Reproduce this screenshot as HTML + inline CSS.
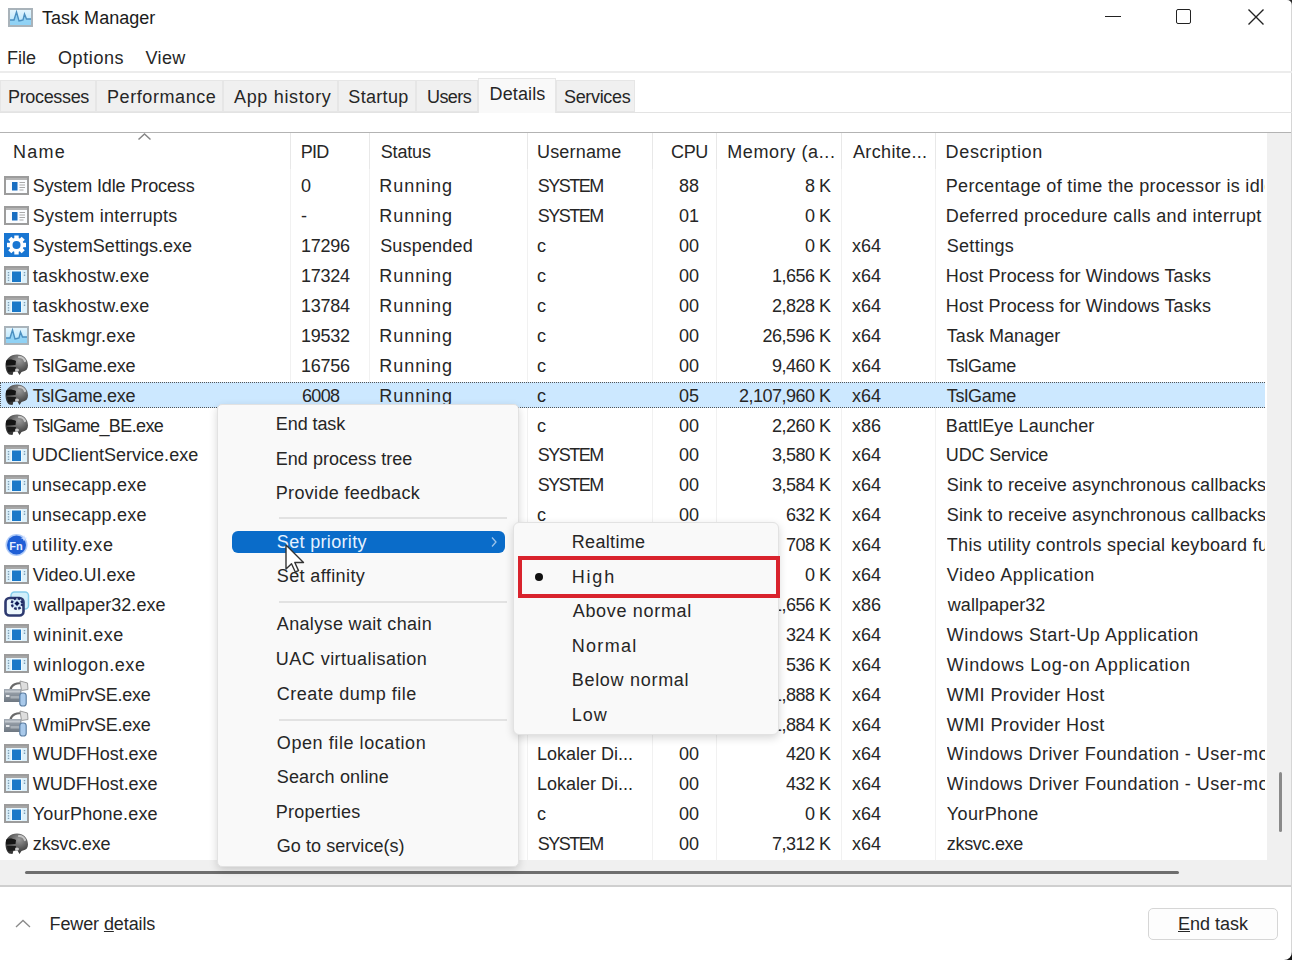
<!DOCTYPE html>
<html><head><meta charset="utf-8"><style>
html,body{margin:0;padding:0;}
body{width:1292px;height:960px;position:relative;overflow:hidden;background:#fff;font-family:"Liberation Sans", sans-serif;}
.t{position:absolute;white-space:nowrap;}
</style></head><body>
<svg width="25" height="19" viewBox="0 0 25 19" style="position:absolute;left:8px;top:8px">
<defs><linearGradient id="tmg88" x1="0" y1="0" x2="0" y2="1"><stop offset="0" stop-color="#e6f6fe"/><stop offset="0.5" stop-color="#c9ecfd"/><stop offset="1" stop-color="#a6dcf8"/></linearGradient></defs>
<rect x="1" y="1" width="23" height="17" fill="url(#tmg88)" stroke="#a9b3ba" stroke-width="2"/>
<path d="M2 12 L6 12 L8.5 4 L11 13 L13 12.5 L15 12 L16.5 6 L18.5 11 L23 11 L23 17 L2 17 Z" fill="#8dd0f4" opacity="0.9"/>
<polyline points="2,12 6,12 8.5,4 11,13 13,12.5 15,12 16.5,6 18.5,11 23,11" fill="none" stroke="#4b8fc0" stroke-width="1.4"/>
</svg>
<div class="t" style="left:42.00px;top:7.56px;font-size:18px;line-height:20.00px;color:#1b1b1b;letter-spacing:0.022px;">Task Manager</div>
<div style="position:absolute;left:1105px;top:16px;width:16px;height:1.3px;background:#222"></div>
<div style="position:absolute;left:1176px;top:9px;width:15px;height:15px;border:1.5px solid #222;border-radius:2px;box-sizing:border-box"></div>
<svg width="18" height="18" style="position:absolute;left:1247px;top:8px"><path d="M1.5 1.5 L16.5 16.5 M16.5 1.5 L1.5 16.5" stroke="#222" stroke-width="1.4"/></svg>
<div style="position:absolute;left:1291px;top:0px;width:1px;height:960px;background:#d6d6d6"></div>
<div class="t" style="left:7.00px;top:47.76px;font-size:18px;line-height:20.00px;color:#262626;letter-spacing:0.002px;">File</div>
<div class="t" style="left:58.00px;top:47.76px;font-size:18px;line-height:20.00px;color:#262626;letter-spacing:0.594px;">Options</div>
<div class="t" style="left:145.50px;top:47.76px;font-size:18px;line-height:20.00px;color:#262626;letter-spacing:0.370px;">View</div>
<div style="position:absolute;left:0px;top:71px;width:1292px;height:2px;background:#ececec"></div>
<div style="position:absolute;left:0px;top:111.5px;width:1292px;height:1px;background:#e3e3e3"></div>
<div style="position:absolute;left:0px;top:80px;width:96px;height:32px;background:#f0f0f0;border:1px solid #e6e6e6;box-sizing:border-box"></div>
<div class="t" style="left:8.00px;top:86.76px;font-size:18px;line-height:20.00px;color:#262626;letter-spacing:-0.342px;">Processes</div>
<div style="position:absolute;left:96px;top:80px;width:127px;height:32px;background:#f0f0f0;border:1px solid #e6e6e6;box-sizing:border-box"></div>
<div class="t" style="left:107.00px;top:86.76px;font-size:18px;line-height:20.00px;color:#262626;letter-spacing:0.577px;">Performance</div>
<div style="position:absolute;left:223px;top:80px;width:115px;height:32px;background:#f0f0f0;border:1px solid #e6e6e6;box-sizing:border-box"></div>
<div class="t" style="left:234.00px;top:86.76px;font-size:18px;line-height:20.00px;color:#262626;letter-spacing:0.676px;">App history</div>
<div style="position:absolute;left:338px;top:80px;width:78px;height:32px;background:#f0f0f0;border:1px solid #e6e6e6;box-sizing:border-box"></div>
<div class="t" style="left:348.30px;top:86.76px;font-size:18px;line-height:20.00px;color:#262626;letter-spacing:0.329px;">Startup</div>
<div style="position:absolute;left:416px;top:80px;width:62px;height:32px;background:#f0f0f0;border:1px solid #e6e6e6;box-sizing:border-box"></div>
<div class="t" style="left:427.00px;top:86.76px;font-size:18px;line-height:20.00px;color:#262626;letter-spacing:-0.576px;">Users</div>
<div style="position:absolute;left:478px;top:77.5px;width:78px;height:35px;background:#f9f9f9;border:1px solid #e6e6e6;border-bottom:none;box-sizing:border-box"></div>
<div class="t" style="left:489.50px;top:84.16px;font-size:18px;line-height:20.00px;color:#262626;letter-spacing:0.130px;">Details</div>
<div style="position:absolute;left:556px;top:80px;width:79px;height:32px;background:#f0f0f0;border:1px solid #e6e6e6;box-sizing:border-box"></div>
<div class="t" style="left:564.00px;top:86.76px;font-size:18px;line-height:20.00px;color:#262626;letter-spacing:-0.332px;">Services</div>
<div style="position:absolute;left:0px;top:131.5px;width:1291px;height:1.5px;background:#b3b3b3"></div>
<svg width="16" height="9" style="position:absolute;left:137px;top:132px"><path d="M1.5 7.5 L7.5 2 L13.5 7.5" fill="none" stroke="#858585" stroke-width="1.5"/></svg>
<div class="t" style="left:13.00px;top:141.76px;font-size:18px;line-height:20.00px;color:#262626;letter-spacing:1.265px;">Name</div>
<div class="t" style="left:300.80px;top:141.76px;font-size:18px;line-height:20.00px;color:#262626;letter-spacing:-0.753px;">PID</div>
<div class="t" style="left:380.70px;top:141.76px;font-size:18px;line-height:20.00px;color:#262626;letter-spacing:-0.146px;">Status</div>
<div class="t" style="left:537.00px;top:141.76px;font-size:18px;line-height:20.00px;color:#262626;letter-spacing:0.183px;">Username</div>
<div class="t" style="left:671.00px;top:141.76px;font-size:18px;line-height:20.00px;color:#262626;letter-spacing:-0.352px;">CPU</div>
<div class="t" style="left:727.20px;top:141.76px;font-size:18px;line-height:20.00px;color:#262626;letter-spacing:0.608px;">Memory (a...</div>
<div class="t" style="left:853.00px;top:141.76px;font-size:18px;line-height:20.00px;color:#262626;letter-spacing:0.342px;">Archite...</div>
<div class="t" style="left:945.60px;top:141.76px;font-size:18px;line-height:20.00px;color:#262626;letter-spacing:0.668px;">Description</div>
<div style="position:absolute;left:1267px;top:133px;width:24px;height:727px;background:#f0f0f0"></div>
<div style="position:absolute;left:1279px;top:772px;width:2.5px;height:60px;background:#8a8a8a;border-radius:2px"></div>
<div style="position:absolute;left:290px;top:133px;width:1px;height:727px;background:#f1f1f1"></div>
<div style="position:absolute;left:290px;top:133px;width:1px;height:36px;background:#e8e8e8"></div>
<div style="position:absolute;left:369px;top:133px;width:1px;height:727px;background:#f1f1f1"></div>
<div style="position:absolute;left:369px;top:133px;width:1px;height:36px;background:#e8e8e8"></div>
<div style="position:absolute;left:527px;top:133px;width:1px;height:727px;background:#f1f1f1"></div>
<div style="position:absolute;left:527px;top:133px;width:1px;height:36px;background:#e8e8e8"></div>
<div style="position:absolute;left:652px;top:133px;width:1px;height:727px;background:#f1f1f1"></div>
<div style="position:absolute;left:652px;top:133px;width:1px;height:36px;background:#e8e8e8"></div>
<div style="position:absolute;left:716px;top:133px;width:1px;height:727px;background:#f1f1f1"></div>
<div style="position:absolute;left:716px;top:133px;width:1px;height:36px;background:#e8e8e8"></div>
<div style="position:absolute;left:841px;top:133px;width:1px;height:727px;background:#f1f1f1"></div>
<div style="position:absolute;left:841px;top:133px;width:1px;height:36px;background:#e8e8e8"></div>
<div style="position:absolute;left:935px;top:133px;width:1px;height:727px;background:#f1f1f1"></div>
<div style="position:absolute;left:935px;top:133px;width:1px;height:36px;background:#e8e8e8"></div>
<div style="position:absolute;left:0px;top:381.7px;width:1265px;height:26px;background:#cce8ff;border:1px dotted #555;border-right:none;box-sizing:border-box"></div>
<svg width="25" height="19" style="position:absolute;left:4px;top:176px"><rect x="1" y="1" width="23" height="17" fill="#fbfdff" stroke="#9c9c9c" stroke-width="2"/><rect x="2" y="2" width="21" height="2" fill="#b5b5b5"/><rect x="8" y="6" width="5.5" height="8.5" fill="#1a6fc2"/><path d="M15.5 6.5h5.5M15.5 9h5.5M15.5 11.5h5.5M15.5 14h4" stroke="#a9a9a9" stroke-width="1"/></svg>
<div class="t" style="left:32.80px;top:176.36px;font-size:18px;line-height:20.00px;color:#262626;letter-spacing:-0.120px;">System Idle Process</div>
<div class="t" style="left:301.00px;top:176.36px;font-size:18px;line-height:20.00px;color:#262626;">0</div>
<div class="t" style="left:379.20px;top:176.36px;font-size:18px;line-height:20.00px;color:#262626;letter-spacing:0.976px;">Running</div>
<div class="t" style="left:537.70px;top:176.36px;font-size:18px;line-height:20.00px;color:#262626;letter-spacing:-1.484px;">SYSTEM</div>
<div class="t" style="right:593px;top:176.36px;font-size:18px;line-height:20.00px;color:#262626;text-align:right;">88</div>
<div class="t" style="right:461.5px;top:176.36px;font-size:18px;line-height:20.00px;color:#262626;text-align:right;letter-spacing:-0.5px">8 K</div>
<div class="t" style="left:852.00px;top:176.36px;font-size:18px;line-height:20.00px;color:#262626;"></div>
<div class="t" style="left:945.80px;top:176.36px;width:319.70px;overflow:hidden;font-size:18px;line-height:20px;color:#262626;letter-spacing:0.317px">Percentage of time the processor is idle</div>
<svg width="25" height="19" style="position:absolute;left:4px;top:206px"><rect x="1" y="1" width="23" height="17" fill="#fbfdff" stroke="#9c9c9c" stroke-width="2"/><rect x="2" y="2" width="21" height="2" fill="#b5b5b5"/><rect x="8" y="6" width="5.5" height="8.5" fill="#1a6fc2"/><path d="M15.5 6.5h5.5M15.5 9h5.5M15.5 11.5h5.5M15.5 14h4" stroke="#a9a9a9" stroke-width="1"/></svg>
<div class="t" style="left:32.80px;top:206.26px;font-size:18px;line-height:20.00px;color:#262626;letter-spacing:0.278px;">System interrupts</div>
<div class="t" style="left:301.00px;top:206.26px;font-size:18px;line-height:20.00px;color:#262626;">-</div>
<div class="t" style="left:379.20px;top:206.26px;font-size:18px;line-height:20.00px;color:#262626;letter-spacing:0.976px;">Running</div>
<div class="t" style="left:537.70px;top:206.26px;font-size:18px;line-height:20.00px;color:#262626;letter-spacing:-1.484px;">SYSTEM</div>
<div class="t" style="right:593px;top:206.26px;font-size:18px;line-height:20.00px;color:#262626;text-align:right;">01</div>
<div class="t" style="right:461.5px;top:206.26px;font-size:18px;line-height:20.00px;color:#262626;text-align:right;letter-spacing:-0.5px">0 K</div>
<div class="t" style="left:852.00px;top:206.26px;font-size:18px;line-height:20.00px;color:#262626;"></div>
<div class="t" style="left:945.80px;top:206.26px;font-size:18px;line-height:20.00px;color:#262626;letter-spacing:0.334px;">Deferred procedure calls and interrupt</div>
<svg width="25" height="25" viewBox="0 0 25 25" style="position:absolute;left:4px;top:233px"><rect x="0" y="0" width="25" height="24" fill="#1976d2"/><g transform="translate(12.5 12)" fill="#fff"><circle r="7.2"/><rect x="-2.2" y="-9.5" width="4.4" height="19" transform="rotate(0)"/><rect x="-2.2" y="-9.5" width="4.4" height="19" transform="rotate(45)"/><rect x="-2.2" y="-9.5" width="4.4" height="19" transform="rotate(90)"/><rect x="-2.2" y="-9.5" width="4.4" height="19" transform="rotate(135)"/></g><circle cx="12.5" cy="12" r="4" fill="#1976d2"/></svg>
<div class="t" style="left:32.80px;top:236.16px;font-size:18px;line-height:20.00px;color:#262626;letter-spacing:0.008px;">SystemSettings.exe</div>
<div class="t" style="left:301.00px;top:236.16px;font-size:18px;line-height:20.00px;color:#262626;letter-spacing:-0.261px;">17296</div>
<div class="t" style="left:380.20px;top:236.16px;font-size:18px;line-height:20.00px;color:#262626;letter-spacing:0.179px;">Suspended</div>
<div class="t" style="left:537.00px;top:236.16px;font-size:18px;line-height:20.00px;color:#262626;">c</div>
<div class="t" style="right:593px;top:236.16px;font-size:18px;line-height:20.00px;color:#262626;text-align:right;">00</div>
<div class="t" style="right:461.5px;top:236.16px;font-size:18px;line-height:20.00px;color:#262626;text-align:right;letter-spacing:-0.5px">0 K</div>
<div class="t" style="left:852.00px;top:236.16px;font-size:18px;line-height:20.00px;color:#262626;">x64</div>
<div class="t" style="left:946.80px;top:236.16px;font-size:18px;line-height:20.00px;color:#262626;letter-spacing:0.280px;">Settings</div>
<svg width="25" height="19" style="position:absolute;left:4px;top:266px"><rect x="1" y="1" width="23" height="17" fill="#eef8fd" stroke="#9c9c9c" stroke-width="2"/><rect x="2" y="2" width="21" height="2" fill="#a8a8a8"/><rect x="2" y="4" width="5" height="13" fill="#ddf1fb"/><rect x="18" y="4" width="5" height="13" fill="#ddf1fb"/><rect x="8" y="5.5" width="9" height="10.5" fill="#1a78c8"/><path d="M4.5 6v9" stroke="#7f9fb5" stroke-width="1.4" stroke-dasharray="1.3 1.3"/><path d="M20.5 6v4" stroke="#7f9fb5" stroke-width="1.4" stroke-dasharray="1.3 1.3"/></svg>
<div class="t" style="left:32.80px;top:266.06px;font-size:18px;line-height:20.00px;color:#262626;letter-spacing:0.287px;">taskhostw.exe</div>
<div class="t" style="left:301.00px;top:266.06px;font-size:18px;line-height:20.00px;color:#262626;letter-spacing:-0.261px;">17324</div>
<div class="t" style="left:379.20px;top:266.06px;font-size:18px;line-height:20.00px;color:#262626;letter-spacing:0.976px;">Running</div>
<div class="t" style="left:537.00px;top:266.06px;font-size:18px;line-height:20.00px;color:#262626;">c</div>
<div class="t" style="right:593px;top:266.06px;font-size:18px;line-height:20.00px;color:#262626;text-align:right;">00</div>
<div class="t" style="right:461.5px;top:266.06px;font-size:18px;line-height:20.00px;color:#262626;text-align:right;letter-spacing:-0.5px">1,656 K</div>
<div class="t" style="left:852.00px;top:266.06px;font-size:18px;line-height:20.00px;color:#262626;">x64</div>
<div class="t" style="left:945.80px;top:266.06px;font-size:18px;line-height:20.00px;color:#262626;letter-spacing:0.118px;">Host Process for Windows Tasks</div>
<svg width="25" height="19" style="position:absolute;left:4px;top:296px"><rect x="1" y="1" width="23" height="17" fill="#eef8fd" stroke="#9c9c9c" stroke-width="2"/><rect x="2" y="2" width="21" height="2" fill="#a8a8a8"/><rect x="2" y="4" width="5" height="13" fill="#ddf1fb"/><rect x="18" y="4" width="5" height="13" fill="#ddf1fb"/><rect x="8" y="5.5" width="9" height="10.5" fill="#1a78c8"/><path d="M4.5 6v9" stroke="#7f9fb5" stroke-width="1.4" stroke-dasharray="1.3 1.3"/><path d="M20.5 6v4" stroke="#7f9fb5" stroke-width="1.4" stroke-dasharray="1.3 1.3"/></svg>
<div class="t" style="left:32.80px;top:295.96px;font-size:18px;line-height:20.00px;color:#262626;letter-spacing:0.287px;">taskhostw.exe</div>
<div class="t" style="left:301.00px;top:295.96px;font-size:18px;line-height:20.00px;color:#262626;letter-spacing:-0.261px;">13784</div>
<div class="t" style="left:379.20px;top:295.96px;font-size:18px;line-height:20.00px;color:#262626;letter-spacing:0.976px;">Running</div>
<div class="t" style="left:537.00px;top:295.96px;font-size:18px;line-height:20.00px;color:#262626;">c</div>
<div class="t" style="right:593px;top:295.96px;font-size:18px;line-height:20.00px;color:#262626;text-align:right;">00</div>
<div class="t" style="right:461.5px;top:295.96px;font-size:18px;line-height:20.00px;color:#262626;text-align:right;letter-spacing:-0.5px">2,828 K</div>
<div class="t" style="left:852.00px;top:295.96px;font-size:18px;line-height:20.00px;color:#262626;">x64</div>
<div class="t" style="left:945.80px;top:295.96px;font-size:18px;line-height:20.00px;color:#262626;letter-spacing:0.118px;">Host Process for Windows Tasks</div>
<svg width="25" height="19" viewBox="0 0 25 19" style="position:absolute;left:4px;top:326px">
<defs><linearGradient id="tmg4326" x1="0" y1="0" x2="0" y2="1"><stop offset="0" stop-color="#e6f6fe"/><stop offset="0.5" stop-color="#c9ecfd"/><stop offset="1" stop-color="#a6dcf8"/></linearGradient></defs>
<rect x="1" y="1" width="23" height="17" fill="url(#tmg4326)" stroke="#a9b3ba" stroke-width="2"/>
<path d="M2 12 L6 12 L8.5 4 L11 13 L13 12.5 L15 12 L16.5 6 L18.5 11 L23 11 L23 17 L2 17 Z" fill="#8dd0f4" opacity="0.9"/>
<polyline points="2,12 6,12 8.5,4 11,13 13,12.5 15,12 16.5,6 18.5,11 23,11" fill="none" stroke="#4b8fc0" stroke-width="1.4"/>
</svg>
<div class="t" style="left:32.80px;top:325.86px;font-size:18px;line-height:20.00px;color:#262626;letter-spacing:0.177px;">Taskmgr.exe</div>
<div class="t" style="left:301.00px;top:325.86px;font-size:18px;line-height:20.00px;color:#262626;letter-spacing:-0.261px;">19532</div>
<div class="t" style="left:379.20px;top:325.86px;font-size:18px;line-height:20.00px;color:#262626;letter-spacing:0.976px;">Running</div>
<div class="t" style="left:537.00px;top:325.86px;font-size:18px;line-height:20.00px;color:#262626;">c</div>
<div class="t" style="right:593px;top:325.86px;font-size:18px;line-height:20.00px;color:#262626;text-align:right;">00</div>
<div class="t" style="right:461.5px;top:325.86px;font-size:18px;line-height:20.00px;color:#262626;text-align:right;letter-spacing:-0.5px">26,596 K</div>
<div class="t" style="left:852.00px;top:325.86px;font-size:18px;line-height:20.00px;color:#262626;">x64</div>
<div class="t" style="left:946.80px;top:325.86px;font-size:18px;line-height:20.00px;color:#262626;letter-spacing:0.040px;">Task Manager</div>
<svg width="25" height="23" viewBox="0 0 25 23" style="position:absolute;left:4px;top:353px"><defs><radialGradient id="hg355" cx="0.6" cy="0.3" r="0.7"><stop offset="0" stop-color="#9a9a9a"/><stop offset="0.6" stop-color="#5a5a5a"/><stop offset="1" stop-color="#333"/></radialGradient></defs><path d="M1.5 13 C1 6 6.5 1.5 13 1.5 C19.5 1.5 24 6 24 12.5 C24 16 22 18 19 18.5 L17.5 19 L15.5 22 L13.5 18.5 L9.5 18.5 L8.5 22 L5 21.5 C2.5 19.5 1.8 16.5 1.5 13 Z" fill="url(#hg355)"/><path d="M2 8 C4 6 8 6 12 8 L11.5 12 L2 12.5 Z" fill="#151515"/><path d="M3 14 L12 14 L11 18.5 L4 19 Z" fill="#1c1c1c"/><path d="M15 4 C17.5 4 20 5.5 21 8" stroke="#c4c4c4" stroke-width="2.2" fill="none" stroke-linecap="round"/><ellipse cx="13" cy="17" rx="2" ry="1.5" fill="#c8c8c8"/></svg>
<div class="t" style="left:32.80px;top:355.76px;font-size:18px;line-height:20.00px;color:#262626;letter-spacing:-0.223px;">TslGame.exe</div>
<div class="t" style="left:301.00px;top:355.76px;font-size:18px;line-height:20.00px;color:#262626;letter-spacing:-0.261px;">16756</div>
<div class="t" style="left:379.20px;top:355.76px;font-size:18px;line-height:20.00px;color:#262626;letter-spacing:0.976px;">Running</div>
<div class="t" style="left:537.00px;top:355.76px;font-size:18px;line-height:20.00px;color:#262626;">c</div>
<div class="t" style="right:593px;top:355.76px;font-size:18px;line-height:20.00px;color:#262626;text-align:right;">00</div>
<div class="t" style="right:461.5px;top:355.76px;font-size:18px;line-height:20.00px;color:#262626;text-align:right;letter-spacing:-0.5px">9,460 K</div>
<div class="t" style="left:852.00px;top:355.76px;font-size:18px;line-height:20.00px;color:#262626;">x64</div>
<div class="t" style="left:946.80px;top:355.76px;font-size:18px;line-height:20.00px;color:#262626;letter-spacing:-0.251px;">TslGame</div>
<svg width="25" height="23" viewBox="0 0 25 23" style="position:absolute;left:4px;top:383px"><defs><radialGradient id="hg385" cx="0.6" cy="0.3" r="0.7"><stop offset="0" stop-color="#9a9a9a"/><stop offset="0.6" stop-color="#5a5a5a"/><stop offset="1" stop-color="#333"/></radialGradient></defs><path d="M1.5 13 C1 6 6.5 1.5 13 1.5 C19.5 1.5 24 6 24 12.5 C24 16 22 18 19 18.5 L17.5 19 L15.5 22 L13.5 18.5 L9.5 18.5 L8.5 22 L5 21.5 C2.5 19.5 1.8 16.5 1.5 13 Z" fill="url(#hg385)"/><path d="M2 8 C4 6 8 6 12 8 L11.5 12 L2 12.5 Z" fill="#151515"/><path d="M3 14 L12 14 L11 18.5 L4 19 Z" fill="#1c1c1c"/><path d="M15 4 C17.5 4 20 5.5 21 8" stroke="#c4c4c4" stroke-width="2.2" fill="none" stroke-linecap="round"/><ellipse cx="13" cy="17" rx="2" ry="1.5" fill="#c8c8c8"/></svg>
<div class="t" style="left:32.80px;top:385.66px;font-size:18px;line-height:20.00px;color:#262626;letter-spacing:-0.223px;">TslGame.exe</div>
<div class="t" style="left:302.00px;top:385.66px;font-size:18px;line-height:20.00px;color:#262626;letter-spacing:-0.677px;">6008</div>
<div class="t" style="left:379.20px;top:385.66px;font-size:18px;line-height:20.00px;color:#262626;letter-spacing:0.976px;">Running</div>
<div class="t" style="left:537.00px;top:385.66px;font-size:18px;line-height:20.00px;color:#262626;">c</div>
<div class="t" style="right:593px;top:385.66px;font-size:18px;line-height:20.00px;color:#262626;text-align:right;">05</div>
<div class="t" style="right:461.5px;top:385.66px;font-size:18px;line-height:20.00px;color:#262626;text-align:right;letter-spacing:-0.5px">2,107,960 K</div>
<div class="t" style="left:852.00px;top:385.66px;font-size:18px;line-height:20.00px;color:#262626;">x64</div>
<div class="t" style="left:946.80px;top:385.66px;font-size:18px;line-height:20.00px;color:#262626;letter-spacing:-0.251px;">TslGame</div>
<svg width="25" height="23" viewBox="0 0 25 23" style="position:absolute;left:4px;top:413px"><defs><radialGradient id="hg415" cx="0.6" cy="0.3" r="0.7"><stop offset="0" stop-color="#9a9a9a"/><stop offset="0.6" stop-color="#5a5a5a"/><stop offset="1" stop-color="#333"/></radialGradient></defs><path d="M1.5 13 C1 6 6.5 1.5 13 1.5 C19.5 1.5 24 6 24 12.5 C24 16 22 18 19 18.5 L17.5 19 L15.5 22 L13.5 18.5 L9.5 18.5 L8.5 22 L5 21.5 C2.5 19.5 1.8 16.5 1.5 13 Z" fill="url(#hg415)"/><path d="M2 8 C4 6 8 6 12 8 L11.5 12 L2 12.5 Z" fill="#151515"/><path d="M3 14 L12 14 L11 18.5 L4 19 Z" fill="#1c1c1c"/><path d="M15 4 C17.5 4 20 5.5 21 8" stroke="#c4c4c4" stroke-width="2.2" fill="none" stroke-linecap="round"/><ellipse cx="13" cy="17" rx="2" ry="1.5" fill="#c8c8c8"/></svg>
<div class="t" style="left:32.80px;top:415.56px;font-size:18px;line-height:20.00px;color:#262626;letter-spacing:-0.619px;">TslGame_BE.exe</div>
<div class="t" style="left:301.00px;top:415.56px;font-size:18px;line-height:20.00px;color:#262626;">4120</div>
<div class="t" style="left:379.20px;top:415.56px;font-size:18px;line-height:20.00px;color:#262626;letter-spacing:0.976px;">Running</div>
<div class="t" style="left:537.00px;top:415.56px;font-size:18px;line-height:20.00px;color:#262626;">c</div>
<div class="t" style="right:593px;top:415.56px;font-size:18px;line-height:20.00px;color:#262626;text-align:right;">00</div>
<div class="t" style="right:461.5px;top:415.56px;font-size:18px;line-height:20.00px;color:#262626;text-align:right;letter-spacing:-0.5px">2,260 K</div>
<div class="t" style="left:852.00px;top:415.56px;font-size:18px;line-height:20.00px;color:#262626;">x86</div>
<div class="t" style="left:945.80px;top:415.56px;font-size:18px;line-height:20.00px;color:#262626;letter-spacing:0.088px;">BattlEye Launcher</div>
<svg width="25" height="19" style="position:absolute;left:4px;top:445px"><rect x="1" y="1" width="23" height="17" fill="#eef8fd" stroke="#9c9c9c" stroke-width="2"/><rect x="2" y="2" width="21" height="2" fill="#a8a8a8"/><rect x="2" y="4" width="5" height="13" fill="#ddf1fb"/><rect x="18" y="4" width="5" height="13" fill="#ddf1fb"/><rect x="8" y="5.5" width="9" height="10.5" fill="#1a78c8"/><path d="M4.5 6v9" stroke="#7f9fb5" stroke-width="1.4" stroke-dasharray="1.3 1.3"/><path d="M20.5 6v4" stroke="#7f9fb5" stroke-width="1.4" stroke-dasharray="1.3 1.3"/></svg>
<div class="t" style="left:31.80px;top:445.46px;font-size:18px;line-height:20.00px;color:#262626;letter-spacing:0.019px;">UDClientService.exe</div>
<div class="t" style="left:301.00px;top:445.46px;font-size:18px;line-height:20.00px;color:#262626;">3712</div>
<div class="t" style="left:379.20px;top:445.46px;font-size:18px;line-height:20.00px;color:#262626;letter-spacing:0.976px;">Running</div>
<div class="t" style="left:537.70px;top:445.46px;font-size:18px;line-height:20.00px;color:#262626;letter-spacing:-1.484px;">SYSTEM</div>
<div class="t" style="right:593px;top:445.46px;font-size:18px;line-height:20.00px;color:#262626;text-align:right;">00</div>
<div class="t" style="right:461.5px;top:445.46px;font-size:18px;line-height:20.00px;color:#262626;text-align:right;letter-spacing:-0.5px">3,580 K</div>
<div class="t" style="left:852.00px;top:445.46px;font-size:18px;line-height:20.00px;color:#262626;">x64</div>
<div class="t" style="left:945.80px;top:445.46px;font-size:18px;line-height:20.00px;color:#262626;letter-spacing:-0.151px;">UDC Service</div>
<svg width="25" height="19" style="position:absolute;left:4px;top:475px"><rect x="1" y="1" width="23" height="17" fill="#eef8fd" stroke="#9c9c9c" stroke-width="2"/><rect x="2" y="2" width="21" height="2" fill="#a8a8a8"/><rect x="2" y="4" width="5" height="13" fill="#ddf1fb"/><rect x="18" y="4" width="5" height="13" fill="#ddf1fb"/><rect x="8" y="5.5" width="9" height="10.5" fill="#1a78c8"/><path d="M4.5 6v9" stroke="#7f9fb5" stroke-width="1.4" stroke-dasharray="1.3 1.3"/><path d="M20.5 6v4" stroke="#7f9fb5" stroke-width="1.4" stroke-dasharray="1.3 1.3"/></svg>
<div class="t" style="left:31.80px;top:475.36px;font-size:18px;line-height:20.00px;color:#262626;letter-spacing:0.248px;">unsecapp.exe</div>
<div class="t" style="left:301.00px;top:475.36px;font-size:18px;line-height:20.00px;color:#262626;">5288</div>
<div class="t" style="left:379.20px;top:475.36px;font-size:18px;line-height:20.00px;color:#262626;letter-spacing:0.976px;">Running</div>
<div class="t" style="left:537.70px;top:475.36px;font-size:18px;line-height:20.00px;color:#262626;letter-spacing:-1.484px;">SYSTEM</div>
<div class="t" style="right:593px;top:475.36px;font-size:18px;line-height:20.00px;color:#262626;text-align:right;">00</div>
<div class="t" style="right:461.5px;top:475.36px;font-size:18px;line-height:20.00px;color:#262626;text-align:right;letter-spacing:-0.5px">3,584 K</div>
<div class="t" style="left:852.00px;top:475.36px;font-size:18px;line-height:20.00px;color:#262626;">x64</div>
<div class="t" style="left:946.80px;top:475.36px;width:318.70px;overflow:hidden;font-size:18px;line-height:20px;color:#262626;letter-spacing:0.139px">Sink to receive asynchronous callbacks</div>
<svg width="25" height="19" style="position:absolute;left:4px;top:505px"><rect x="1" y="1" width="23" height="17" fill="#eef8fd" stroke="#9c9c9c" stroke-width="2"/><rect x="2" y="2" width="21" height="2" fill="#a8a8a8"/><rect x="2" y="4" width="5" height="13" fill="#ddf1fb"/><rect x="18" y="4" width="5" height="13" fill="#ddf1fb"/><rect x="8" y="5.5" width="9" height="10.5" fill="#1a78c8"/><path d="M4.5 6v9" stroke="#7f9fb5" stroke-width="1.4" stroke-dasharray="1.3 1.3"/><path d="M20.5 6v4" stroke="#7f9fb5" stroke-width="1.4" stroke-dasharray="1.3 1.3"/></svg>
<div class="t" style="left:31.80px;top:505.26px;font-size:18px;line-height:20.00px;color:#262626;letter-spacing:0.248px;">unsecapp.exe</div>
<div class="t" style="left:301.00px;top:505.26px;font-size:18px;line-height:20.00px;color:#262626;">9876</div>
<div class="t" style="left:379.20px;top:505.26px;font-size:18px;line-height:20.00px;color:#262626;letter-spacing:0.976px;">Running</div>
<div class="t" style="left:537.00px;top:505.26px;font-size:18px;line-height:20.00px;color:#262626;">c</div>
<div class="t" style="right:593px;top:505.26px;font-size:18px;line-height:20.00px;color:#262626;text-align:right;">00</div>
<div class="t" style="right:461.5px;top:505.26px;font-size:18px;line-height:20.00px;color:#262626;text-align:right;letter-spacing:-0.5px">632 K</div>
<div class="t" style="left:852.00px;top:505.26px;font-size:18px;line-height:20.00px;color:#262626;">x64</div>
<div class="t" style="left:946.80px;top:505.26px;width:318.70px;overflow:hidden;font-size:18px;line-height:20px;color:#262626;letter-spacing:0.139px">Sink to receive asynchronous callbacks</div>
<svg width="26" height="26" style="position:absolute;left:4px;top:532px"><circle cx="12.5" cy="13" r="11" fill="#6d9ff0" opacity="0.55"/><circle cx="12.5" cy="13" r="9.5" fill="#1f5fd6"/><text x="12" y="17.5" font-size="11" font-family="Liberation Sans" font-weight="bold" fill="#e8f0ff" text-anchor="middle">Fn</text><path d="M20 3 L21 5.5 L23.5 6 L21 7 L20 9.5 L19 7 L16.5 6 L19 5.5 Z" fill="#cfe0ff"/></svg>
<div class="t" style="left:31.80px;top:535.16px;font-size:18px;line-height:20.00px;color:#262626;letter-spacing:0.741px;">utility.exe</div>
<div class="t" style="left:301.00px;top:535.16px;font-size:18px;line-height:20.00px;color:#262626;">8820</div>
<div class="t" style="left:379.20px;top:535.16px;font-size:18px;line-height:20.00px;color:#262626;letter-spacing:0.976px;">Running</div>
<div class="t" style="left:537.00px;top:535.16px;font-size:18px;line-height:20.00px;color:#262626;">c</div>
<div class="t" style="right:593px;top:535.16px;font-size:18px;line-height:20.00px;color:#262626;text-align:right;">00</div>
<div class="t" style="right:461.5px;top:535.16px;font-size:18px;line-height:20.00px;color:#262626;text-align:right;letter-spacing:-0.5px">708 K</div>
<div class="t" style="left:852.00px;top:535.16px;font-size:18px;line-height:20.00px;color:#262626;">x64</div>
<div class="t" style="left:946.80px;top:535.16px;width:318.70px;overflow:hidden;font-size:18px;line-height:20px;color:#262626;letter-spacing:0.327px">This utility controls special keyboard functions</div>
<svg width="25" height="19" style="position:absolute;left:4px;top:565px"><rect x="1" y="1" width="23" height="17" fill="#eef8fd" stroke="#9c9c9c" stroke-width="2"/><rect x="2" y="2" width="21" height="2" fill="#a8a8a8"/><rect x="2" y="4" width="5" height="13" fill="#ddf1fb"/><rect x="18" y="4" width="5" height="13" fill="#ddf1fb"/><rect x="8" y="5.5" width="9" height="10.5" fill="#1a78c8"/><path d="M4.5 6v9" stroke="#7f9fb5" stroke-width="1.4" stroke-dasharray="1.3 1.3"/><path d="M20.5 6v4" stroke="#7f9fb5" stroke-width="1.4" stroke-dasharray="1.3 1.3"/></svg>
<div class="t" style="left:32.80px;top:565.06px;font-size:18px;line-height:20.00px;color:#262626;letter-spacing:0.007px;">Video.UI.exe</div>
<div class="t" style="left:301.00px;top:565.06px;font-size:18px;line-height:20.00px;color:#262626;">12044</div>
<div class="t" style="left:380.20px;top:565.06px;font-size:18px;line-height:20.00px;color:#262626;letter-spacing:0.179px;">Suspended</div>
<div class="t" style="left:537.00px;top:565.06px;font-size:18px;line-height:20.00px;color:#262626;">c</div>
<div class="t" style="right:593px;top:565.06px;font-size:18px;line-height:20.00px;color:#262626;text-align:right;">00</div>
<div class="t" style="right:461.5px;top:565.06px;font-size:18px;line-height:20.00px;color:#262626;text-align:right;letter-spacing:-0.5px">0 K</div>
<div class="t" style="left:852.00px;top:565.06px;font-size:18px;line-height:20.00px;color:#262626;">x64</div>
<div class="t" style="left:946.80px;top:565.06px;font-size:18px;line-height:20.00px;color:#262626;letter-spacing:0.609px;">Video Application</div>
<svg width="26" height="26" style="position:absolute;left:4px;top:591px"><rect x="7" y="1" width="17.5" height="17" rx="3.5" fill="#d2effb" stroke="#86cdec" stroke-width="1.5"/><rect x="1.5" y="7" width="18" height="17.5" rx="4" fill="#eef8fd" stroke="#2e3a70" stroke-width="2.6"/><circle cx="13" cy="12.5" r="5.2" fill="#cfe6f7" stroke="#1f2b66" stroke-width="2.4" stroke-dasharray="2.6 1.5"/><path d="M13 10 L15.5 12.5 L13 15 L10.5 12.5 Z" fill="#0a1550"/></svg>
<div class="t" style="left:33.80px;top:594.96px;font-size:18px;line-height:20.00px;color:#262626;letter-spacing:0.044px;">wallpaper32.exe</div>
<div class="t" style="left:301.00px;top:594.96px;font-size:18px;line-height:20.00px;color:#262626;">7344</div>
<div class="t" style="left:379.20px;top:594.96px;font-size:18px;line-height:20.00px;color:#262626;letter-spacing:0.976px;">Running</div>
<div class="t" style="left:537.00px;top:594.96px;font-size:18px;line-height:20.00px;color:#262626;">c</div>
<div class="t" style="right:593px;top:594.96px;font-size:18px;line-height:20.00px;color:#262626;text-align:right;">00</div>
<div class="t" style="right:461.5px;top:594.96px;font-size:18px;line-height:20.00px;color:#262626;text-align:right;letter-spacing:-0.5px">1,656 K</div>
<div class="t" style="left:852.00px;top:594.96px;font-size:18px;line-height:20.00px;color:#262626;">x86</div>
<div class="t" style="left:947.80px;top:594.96px;font-size:18px;line-height:20.00px;color:#262626;letter-spacing:0.044px;">wallpaper32</div>
<svg width="25" height="19" style="position:absolute;left:4px;top:624px"><rect x="1" y="1" width="23" height="17" fill="#eef8fd" stroke="#9c9c9c" stroke-width="2"/><rect x="2" y="2" width="21" height="2" fill="#a8a8a8"/><rect x="2" y="4" width="5" height="13" fill="#ddf1fb"/><rect x="18" y="4" width="5" height="13" fill="#ddf1fb"/><rect x="8" y="5.5" width="9" height="10.5" fill="#1a78c8"/><path d="M4.5 6v9" stroke="#7f9fb5" stroke-width="1.4" stroke-dasharray="1.3 1.3"/><path d="M20.5 6v4" stroke="#7f9fb5" stroke-width="1.4" stroke-dasharray="1.3 1.3"/></svg>
<div class="t" style="left:33.80px;top:624.86px;font-size:18px;line-height:20.00px;color:#262626;letter-spacing:0.547px;">wininit.exe</div>
<div class="t" style="left:301.00px;top:624.86px;font-size:18px;line-height:20.00px;color:#262626;">892</div>
<div class="t" style="left:379.20px;top:624.86px;font-size:18px;line-height:20.00px;color:#262626;letter-spacing:0.976px;">Running</div>
<div class="t" style="left:537.70px;top:624.86px;font-size:18px;line-height:20.00px;color:#262626;letter-spacing:-1.484px;">SYSTEM</div>
<div class="t" style="right:593px;top:624.86px;font-size:18px;line-height:20.00px;color:#262626;text-align:right;">00</div>
<div class="t" style="right:461.5px;top:624.86px;font-size:18px;line-height:20.00px;color:#262626;text-align:right;letter-spacing:-0.5px">324 K</div>
<div class="t" style="left:852.00px;top:624.86px;font-size:18px;line-height:20.00px;color:#262626;">x64</div>
<div class="t" style="left:946.80px;top:624.86px;font-size:18px;line-height:20.00px;color:#262626;letter-spacing:0.534px;">Windows Start-Up Application</div>
<svg width="25" height="19" style="position:absolute;left:4px;top:654px"><rect x="1" y="1" width="23" height="17" fill="#eef8fd" stroke="#9c9c9c" stroke-width="2"/><rect x="2" y="2" width="21" height="2" fill="#a8a8a8"/><rect x="2" y="4" width="5" height="13" fill="#ddf1fb"/><rect x="18" y="4" width="5" height="13" fill="#ddf1fb"/><rect x="8" y="5.5" width="9" height="10.5" fill="#1a78c8"/><path d="M4.5 6v9" stroke="#7f9fb5" stroke-width="1.4" stroke-dasharray="1.3 1.3"/><path d="M20.5 6v4" stroke="#7f9fb5" stroke-width="1.4" stroke-dasharray="1.3 1.3"/></svg>
<div class="t" style="left:33.80px;top:654.76px;font-size:18px;line-height:20.00px;color:#262626;letter-spacing:0.549px;">winlogon.exe</div>
<div class="t" style="left:301.00px;top:654.76px;font-size:18px;line-height:20.00px;color:#262626;">980</div>
<div class="t" style="left:379.20px;top:654.76px;font-size:18px;line-height:20.00px;color:#262626;letter-spacing:0.976px;">Running</div>
<div class="t" style="left:537.70px;top:654.76px;font-size:18px;line-height:20.00px;color:#262626;letter-spacing:-1.484px;">SYSTEM</div>
<div class="t" style="right:593px;top:654.76px;font-size:18px;line-height:20.00px;color:#262626;text-align:right;">00</div>
<div class="t" style="right:461.5px;top:654.76px;font-size:18px;line-height:20.00px;color:#262626;text-align:right;letter-spacing:-0.5px">536 K</div>
<div class="t" style="left:852.00px;top:654.76px;font-size:18px;line-height:20.00px;color:#262626;">x64</div>
<div class="t" style="left:946.80px;top:654.76px;font-size:18px;line-height:20.00px;color:#262626;letter-spacing:0.683px;">Windows Log-on Application</div>
<svg width="27" height="27" style="position:absolute;left:3px;top:680px"><defs><linearGradient id="wg684" x1="0" y1="0" x2="0" y2="1"><stop offset="0" stop-color="#a3abb4"/><stop offset="1" stop-color="#6e7781"/></linearGradient></defs><path d="M7.5 9.5 C8.5 4.5 14 2.5 19 3.5" stroke="#6a6a6a" stroke-width="2.2" fill="none"/><path d="M17 1 L24.5 3 L25 9.5 L18.5 10.5 Z" fill="#dedede" stroke="#9c9c9c" stroke-width="1"/><rect x="1" y="9" width="17.5" height="13" fill="url(#wg684)"/><rect x="2" y="10.5" width="15" height="2" fill="#c3c9cf"/><rect x="3" y="15" width="3.5" height="2" fill="#e6e9ec"/><rect x="7.5" y="16" width="10" height="2.5" fill="#a8afb6"/><rect x="16.8" y="13" width="6.4" height="13" rx="2.8" fill="#a9c9ea" stroke="#5d7fa3" stroke-width="1.2"/></svg>
<div class="t" style="left:32.80px;top:684.66px;font-size:18px;line-height:20.00px;color:#262626;letter-spacing:-0.282px;">WmiPrvSE.exe</div>
<div class="t" style="left:301.00px;top:684.66px;font-size:18px;line-height:20.00px;color:#262626;">4404</div>
<div class="t" style="left:379.20px;top:684.66px;font-size:18px;line-height:20.00px;color:#262626;letter-spacing:0.976px;">Running</div>
<div class="t" style="left:537.00px;top:684.66px;font-size:18px;line-height:20.00px;color:#262626;">NETWORK...</div>
<div class="t" style="right:593px;top:684.66px;font-size:18px;line-height:20.00px;color:#262626;text-align:right;">00</div>
<div class="t" style="right:461.5px;top:684.66px;font-size:18px;line-height:20.00px;color:#262626;text-align:right;letter-spacing:-0.5px">1,888 K</div>
<div class="t" style="left:852.00px;top:684.66px;font-size:18px;line-height:20.00px;color:#262626;">x64</div>
<div class="t" style="left:946.80px;top:684.66px;font-size:18px;line-height:20.00px;color:#262626;letter-spacing:0.405px;">WMI Provider Host</div>
<svg width="27" height="27" style="position:absolute;left:3px;top:710px"><defs><linearGradient id="wg714" x1="0" y1="0" x2="0" y2="1"><stop offset="0" stop-color="#a3abb4"/><stop offset="1" stop-color="#6e7781"/></linearGradient></defs><path d="M7.5 9.5 C8.5 4.5 14 2.5 19 3.5" stroke="#6a6a6a" stroke-width="2.2" fill="none"/><path d="M17 1 L24.5 3 L25 9.5 L18.5 10.5 Z" fill="#dedede" stroke="#9c9c9c" stroke-width="1"/><rect x="1" y="9" width="17.5" height="13" fill="url(#wg714)"/><rect x="2" y="10.5" width="15" height="2" fill="#c3c9cf"/><rect x="3" y="15" width="3.5" height="2" fill="#e6e9ec"/><rect x="7.5" y="16" width="10" height="2.5" fill="#a8afb6"/><rect x="16.8" y="13" width="6.4" height="13" rx="2.8" fill="#a9c9ea" stroke="#5d7fa3" stroke-width="1.2"/></svg>
<div class="t" style="left:32.80px;top:714.56px;font-size:18px;line-height:20.00px;color:#262626;letter-spacing:-0.282px;">WmiPrvSE.exe</div>
<div class="t" style="left:301.00px;top:714.56px;font-size:18px;line-height:20.00px;color:#262626;">5120</div>
<div class="t" style="left:379.20px;top:714.56px;font-size:18px;line-height:20.00px;color:#262626;letter-spacing:0.976px;">Running</div>
<div class="t" style="left:537.70px;top:714.56px;font-size:18px;line-height:20.00px;color:#262626;letter-spacing:-1.484px;">SYSTEM</div>
<div class="t" style="right:593px;top:714.56px;font-size:18px;line-height:20.00px;color:#262626;text-align:right;">00</div>
<div class="t" style="right:461.5px;top:714.56px;font-size:18px;line-height:20.00px;color:#262626;text-align:right;letter-spacing:-0.5px">1,884 K</div>
<div class="t" style="left:852.00px;top:714.56px;font-size:18px;line-height:20.00px;color:#262626;">x64</div>
<div class="t" style="left:946.80px;top:714.56px;font-size:18px;line-height:20.00px;color:#262626;letter-spacing:0.405px;">WMI Provider Host</div>
<svg width="25" height="19" style="position:absolute;left:4px;top:744px"><rect x="1" y="1" width="23" height="17" fill="#eef8fd" stroke="#9c9c9c" stroke-width="2"/><rect x="2" y="2" width="21" height="2" fill="#a8a8a8"/><rect x="2" y="4" width="5" height="13" fill="#ddf1fb"/><rect x="18" y="4" width="5" height="13" fill="#ddf1fb"/><rect x="8" y="5.5" width="9" height="10.5" fill="#1a78c8"/><path d="M4.5 6v9" stroke="#7f9fb5" stroke-width="1.4" stroke-dasharray="1.3 1.3"/><path d="M20.5 6v4" stroke="#7f9fb5" stroke-width="1.4" stroke-dasharray="1.3 1.3"/></svg>
<div class="t" style="left:32.80px;top:744.46px;font-size:18px;line-height:20.00px;color:#262626;letter-spacing:-0.019px;">WUDFHost.exe</div>
<div class="t" style="left:301.00px;top:744.46px;font-size:18px;line-height:20.00px;color:#262626;">1188</div>
<div class="t" style="left:379.20px;top:744.46px;font-size:18px;line-height:20.00px;color:#262626;letter-spacing:0.976px;">Running</div>
<div class="t" style="left:537.00px;top:744.46px;font-size:18px;line-height:20.00px;color:#262626;">Lokaler Di...</div>
<div class="t" style="right:593px;top:744.46px;font-size:18px;line-height:20.00px;color:#262626;text-align:right;">00</div>
<div class="t" style="right:461.5px;top:744.46px;font-size:18px;line-height:20.00px;color:#262626;text-align:right;letter-spacing:-0.5px">420 K</div>
<div class="t" style="left:852.00px;top:744.46px;font-size:18px;line-height:20.00px;color:#262626;">x64</div>
<div class="t" style="left:946.80px;top:744.46px;width:318.70px;overflow:hidden;font-size:18px;line-height:20px;color:#262626;letter-spacing:0.459px">Windows Driver Foundation - User-mode</div>
<svg width="25" height="19" style="position:absolute;left:4px;top:774px"><rect x="1" y="1" width="23" height="17" fill="#eef8fd" stroke="#9c9c9c" stroke-width="2"/><rect x="2" y="2" width="21" height="2" fill="#a8a8a8"/><rect x="2" y="4" width="5" height="13" fill="#ddf1fb"/><rect x="18" y="4" width="5" height="13" fill="#ddf1fb"/><rect x="8" y="5.5" width="9" height="10.5" fill="#1a78c8"/><path d="M4.5 6v9" stroke="#7f9fb5" stroke-width="1.4" stroke-dasharray="1.3 1.3"/><path d="M20.5 6v4" stroke="#7f9fb5" stroke-width="1.4" stroke-dasharray="1.3 1.3"/></svg>
<div class="t" style="left:32.80px;top:774.36px;font-size:18px;line-height:20.00px;color:#262626;letter-spacing:-0.019px;">WUDFHost.exe</div>
<div class="t" style="left:301.00px;top:774.36px;font-size:18px;line-height:20.00px;color:#262626;">1196</div>
<div class="t" style="left:379.20px;top:774.36px;font-size:18px;line-height:20.00px;color:#262626;letter-spacing:0.976px;">Running</div>
<div class="t" style="left:537.00px;top:774.36px;font-size:18px;line-height:20.00px;color:#262626;">Lokaler Di...</div>
<div class="t" style="right:593px;top:774.36px;font-size:18px;line-height:20.00px;color:#262626;text-align:right;">00</div>
<div class="t" style="right:461.5px;top:774.36px;font-size:18px;line-height:20.00px;color:#262626;text-align:right;letter-spacing:-0.5px">432 K</div>
<div class="t" style="left:852.00px;top:774.36px;font-size:18px;line-height:20.00px;color:#262626;">x64</div>
<div class="t" style="left:946.80px;top:774.36px;width:318.70px;overflow:hidden;font-size:18px;line-height:20px;color:#262626;letter-spacing:0.459px">Windows Driver Foundation - User-mode</div>
<svg width="25" height="19" style="position:absolute;left:4px;top:804px"><rect x="1" y="1" width="23" height="17" fill="#eef8fd" stroke="#9c9c9c" stroke-width="2"/><rect x="2" y="2" width="21" height="2" fill="#a8a8a8"/><rect x="2" y="4" width="5" height="13" fill="#ddf1fb"/><rect x="18" y="4" width="5" height="13" fill="#ddf1fb"/><rect x="8" y="5.5" width="9" height="10.5" fill="#1a78c8"/><path d="M4.5 6v9" stroke="#7f9fb5" stroke-width="1.4" stroke-dasharray="1.3 1.3"/><path d="M20.5 6v4" stroke="#7f9fb5" stroke-width="1.4" stroke-dasharray="1.3 1.3"/></svg>
<div class="t" style="left:32.80px;top:804.26px;font-size:18px;line-height:20.00px;color:#262626;letter-spacing:0.198px;">YourPhone.exe</div>
<div class="t" style="left:301.00px;top:804.26px;font-size:18px;line-height:20.00px;color:#262626;">14020</div>
<div class="t" style="left:380.20px;top:804.26px;font-size:18px;line-height:20.00px;color:#262626;letter-spacing:0.179px;">Suspended</div>
<div class="t" style="left:537.00px;top:804.26px;font-size:18px;line-height:20.00px;color:#262626;">c</div>
<div class="t" style="right:593px;top:804.26px;font-size:18px;line-height:20.00px;color:#262626;text-align:right;">00</div>
<div class="t" style="right:461.5px;top:804.26px;font-size:18px;line-height:20.00px;color:#262626;text-align:right;letter-spacing:-0.5px">0 K</div>
<div class="t" style="left:852.00px;top:804.26px;font-size:18px;line-height:20.00px;color:#262626;">x64</div>
<div class="t" style="left:946.80px;top:804.26px;font-size:18px;line-height:20.00px;color:#262626;letter-spacing:0.387px;">YourPhone</div>
<svg width="25" height="23" viewBox="0 0 25 23" style="position:absolute;left:4px;top:832px"><defs><radialGradient id="hg834" cx="0.6" cy="0.3" r="0.7"><stop offset="0" stop-color="#9a9a9a"/><stop offset="0.6" stop-color="#5a5a5a"/><stop offset="1" stop-color="#333"/></radialGradient></defs><path d="M1.5 13 C1 6 6.5 1.5 13 1.5 C19.5 1.5 24 6 24 12.5 C24 16 22 18 19 18.5 L17.5 19 L15.5 22 L13.5 18.5 L9.5 18.5 L8.5 22 L5 21.5 C2.5 19.5 1.8 16.5 1.5 13 Z" fill="url(#hg834)"/><path d="M2 8 C4 6 8 6 12 8 L11.5 12 L2 12.5 Z" fill="#151515"/><path d="M3 14 L12 14 L11 18.5 L4 19 Z" fill="#1c1c1c"/><path d="M15 4 C17.5 4 20 5.5 21 8" stroke="#c4c4c4" stroke-width="2.2" fill="none" stroke-linecap="round"/><ellipse cx="13" cy="17" rx="2" ry="1.5" fill="#c8c8c8"/></svg>
<div class="t" style="left:32.80px;top:834.16px;font-size:18px;line-height:20.00px;color:#262626;letter-spacing:-0.164px;">zksvc.exe</div>
<div class="t" style="left:301.00px;top:834.16px;font-size:18px;line-height:20.00px;color:#262626;">3316</div>
<div class="t" style="left:379.20px;top:834.16px;font-size:18px;line-height:20.00px;color:#262626;letter-spacing:0.976px;">Running</div>
<div class="t" style="left:537.70px;top:834.16px;font-size:18px;line-height:20.00px;color:#262626;letter-spacing:-1.484px;">SYSTEM</div>
<div class="t" style="right:593px;top:834.16px;font-size:18px;line-height:20.00px;color:#262626;text-align:right;">00</div>
<div class="t" style="right:461.5px;top:834.16px;font-size:18px;line-height:20.00px;color:#262626;text-align:right;letter-spacing:-0.5px">7,312 K</div>
<div class="t" style="left:852.00px;top:834.16px;font-size:18px;line-height:20.00px;color:#262626;">x64</div>
<div class="t" style="left:946.80px;top:834.16px;font-size:18px;line-height:20.00px;color:#262626;letter-spacing:-0.314px;">zksvc.exe</div>
<div style="position:absolute;left:0px;top:860px;width:1291px;height:25px;background:#f0f0f0"></div>
<div style="position:absolute;left:25px;top:870.5px;width:1154px;height:3px;background:#6e6e6e;border-radius:2px"></div>
<div style="position:absolute;left:0px;top:885px;width:1291px;height:1.5px;background:#cfcfcf"></div>
<svg width="18" height="12" style="position:absolute;left:14px;top:917px"><path d="M2 10 L9 3.5 L16 10" fill="none" stroke="#8a8a8a" stroke-width="1.3"/></svg>
<div class="t" style="left:49.50px;top:913.56px;font-size:18px;line-height:20.00px;color:#262626;letter-spacing:-0.1px">Fewer <u>d</u>etails</div>
<div style="position:absolute;left:1148px;top:907.5px;width:130px;height:32px;background:#fdfdfd;border:1.5px solid #d6d6d6;border-radius:5px;box-sizing:border-box"></div>
<div class="t" style="left:1178.00px;top:913.76px;font-size:18px;line-height:20.00px;color:#262626;"><u>E</u>nd task</div>
<div style="position:absolute;left:217px;top:404px;width:302px;height:463px;background:#f9f9f9;border-radius:5px;box-shadow:0 3px 9px rgba(0,0,0,0.16);border:1px solid #e2e2e2;box-sizing:border-box"></div>
<div style="position:absolute;left:279px;top:517px;width:228px;height:1.5px;background:#e2e2e2"></div>
<div style="position:absolute;left:279px;top:601px;width:228px;height:1.5px;background:#e2e2e2"></div>
<div style="position:absolute;left:279px;top:719px;width:228px;height:1.5px;background:#e2e2e2"></div>
<div style="position:absolute;left:232px;top:531px;width:273px;height:21.5px;background:#0a6cc9;border-radius:6px"></div>
<div class="t" style="left:275.80px;top:413.76px;font-size:18px;line-height:20.00px;color:#262626;letter-spacing:-0.077px;">End task</div>
<div class="t" style="left:275.80px;top:449.26px;font-size:18px;line-height:20.00px;color:#262626;letter-spacing:0.029px;">End process tree</div>
<div class="t" style="left:275.80px;top:483.46px;font-size:18px;line-height:20.00px;color:#262626;letter-spacing:0.321px;">Provide feedback</div>
<div class="t" style="left:276.80px;top:532.16px;font-size:18px;line-height:20.00px;color:#e6f2ff;letter-spacing:0.334px;">Set priority</div>
<div class="t" style="left:276.80px;top:566.36px;font-size:18px;line-height:20.00px;color:#262626;letter-spacing:0.389px;">Set affinity</div>
<div class="t" style="left:276.80px;top:614.36px;font-size:18px;line-height:20.00px;color:#262626;letter-spacing:0.343px;">Analyse wait chain</div>
<div class="t" style="left:275.80px;top:649.36px;font-size:18px;line-height:20.00px;color:#262626;letter-spacing:0.468px;">UAC virtualisation</div>
<div class="t" style="left:276.80px;top:684.36px;font-size:18px;line-height:20.00px;color:#262626;letter-spacing:0.496px;">Create dump file</div>
<div class="t" style="left:276.80px;top:732.76px;font-size:18px;line-height:20.00px;color:#262626;letter-spacing:0.578px;">Open file location</div>
<div class="t" style="left:276.80px;top:767.46px;font-size:18px;line-height:20.00px;color:#262626;letter-spacing:0.153px;">Search online</div>
<div class="t" style="left:275.80px;top:801.76px;font-size:18px;line-height:20.00px;color:#262626;letter-spacing:0.263px;">Properties</div>
<div class="t" style="left:276.80px;top:835.76px;font-size:18px;line-height:20.00px;color:#262626;letter-spacing:0.051px;">Go to service(s)</div>
<svg width="8" height="12" style="position:absolute;left:490px;top:536px"><path d="M2 1.5 L6 6 L2 10.5" fill="none" stroke="#9cc4ea" stroke-width="1.3"/></svg>
<svg width="24" height="32" style="position:absolute;left:284px;top:543px"><path d="M2 2 L2 26 L7.5 20.7 L11.3 29 L14.5 27.6 L10.8 19.5 L19.5 19.5 Z" fill="#fff" stroke="#333" stroke-width="1.4" stroke-linejoin="round"/></svg>
<div style="position:absolute;left:513px;top:521.5px;width:266px;height:213px;background:#f9f9f9;border-radius:6px;box-shadow:0 3px 9px rgba(0,0,0,0.16);border:1px solid #e2e2e2;box-sizing:border-box"></div>
<div class="t" style="left:571.70px;top:532.46px;font-size:18px;line-height:20.00px;color:#262626;letter-spacing:0.341px;">Realtime</div>
<div class="t" style="left:571.70px;top:566.76px;font-size:18px;line-height:20.00px;color:#262626;letter-spacing:1.830px;">High</div>
<div class="t" style="left:572.70px;top:600.76px;font-size:18px;line-height:20.00px;color:#262626;letter-spacing:0.685px;">Above normal</div>
<div class="t" style="left:571.70px;top:635.56px;font-size:18px;line-height:20.00px;color:#262626;letter-spacing:1.318px;">Normal</div>
<div class="t" style="left:571.70px;top:669.76px;font-size:18px;line-height:20.00px;color:#262626;letter-spacing:0.714px;">Below normal</div>
<div class="t" style="left:571.70px;top:704.76px;font-size:18px;line-height:20.00px;color:#262626;letter-spacing:0.989px;">Low</div>
<div style="position:absolute;left:534.5px;top:572.5px;width:8px;height:8px;border-radius:50%;background:#111"></div>
<div style="position:absolute;left:518px;top:556px;width:262px;height:42px;border:4px solid #d9232d;box-sizing:border-box"></div>
<svg width="1292" height="960" style="position:absolute;left:0;top:0"><path d="M1292 952 A8 8 0 0 1 1284 960 L1292 960 Z" fill="#151515"/><path d="M1287 0 A5 5 0 0 1 1292 5 L1292 0 Z" fill="#2a2a2a"/></svg>
</body></html>
